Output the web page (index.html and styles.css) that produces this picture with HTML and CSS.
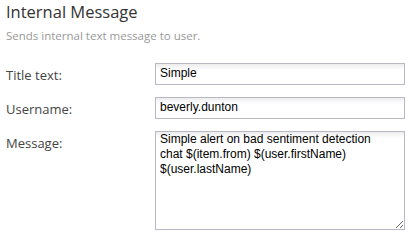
FILE: index.html
```html
<!DOCTYPE html>
<html lang="en">
<head>
    <meta charset="UTF-8">
    <meta name="viewport" content="width=device-width, initial-scale=1.0">
    <title>Internal Message</title>
    <link rel="stylesheet" href="styles.css">
</head>
<body>
    <div class="panel">
        <h1 class="title">Internal Message</h1>
        <p class="subtitle">Sends internal text message to user.</p>

        <div class="form">
            <label class="label" for="titleText">Title text:</label>
            <input class="field" id="titleText" type="text" value="Simple">

            <label class="label" for="userName">Username:</label>
            <input class="field" id="userName" type="text" value="beverly.dunton">

            <label class="label" for="message">Message:</label>
            <textarea class="field area" id="message">Simple alert on bad sentiment detection chat $(item.from) $(user.firstName) $(user.lastName)</textarea>
        </div>
    </div>
</body>
</html>
```

FILE: styles.css
```css
body {
    margin: 0;
    background: #fff;
    font-family: "Open Sans", sans-serif;
}

.panel {
    padding: 1px 6px 0 6px;
}

.title {
    margin: 0;
    font-size: 16.5px;
    font-weight: normal;
    line-height: 22px;
    color: #333;
}

.subtitle {
    margin: 6px 0 0 0;
    font-size: 11.5px;
    line-height: 14px;
    color: #999;
}

.form {
    display: grid;
    grid-template-columns: 149px 250px;
    row-gap: 12px;
    margin-top: 20px;
}

.label {
    font-size: 13px;
    color: #444;
    padding-top: 3px;
}

.field {
    box-sizing: border-box;
    width: 250px;
    height: 22px;
    margin: 0;
    padding: 0 4px 2px 4px;
    border: 1px solid #b9b9c6;
    border-radius: 0;
    background: linear-gradient(#ececec, #fff 6px);
    font-family: "Liberation Sans", Arial, sans-serif;
    font-size: 12px;
    color: #000;
    outline: none;
}

.area {
    height: 99px;
    padding: 0 14px 2px 4px;
    line-height: 15px;
    resize: vertical;
}
```
